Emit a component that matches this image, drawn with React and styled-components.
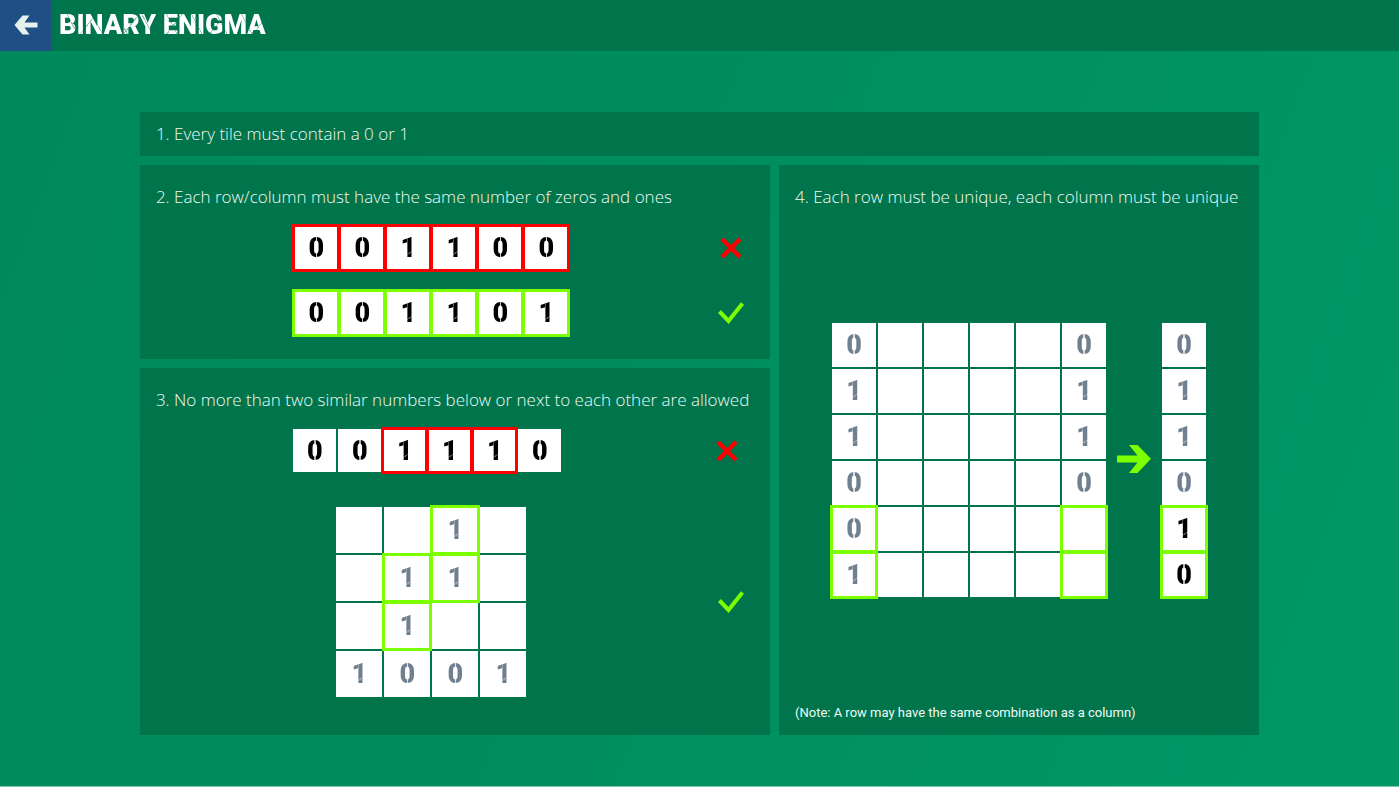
import styled, { createGlobalStyle, css } from "styled-components";

const GlobalStyle = createGlobalStyle`
  * {
    box-sizing: border-box;
  }

  body {
    margin: 0;
    font-family: "Open Sans", "Noto Sans", sans-serif;
    color: #f0faf5;
  }
`;

const colors = {
  panel: "#00754c",
  wrong: "#ff0000",
  right: "#7cff00",
  given: "#708090",
  filled: "#000000",
};

const Page = styled.div`
  min-height: 100vh;
  background: linear-gradient(110deg, #008a5b 0%, #008d5e 45%, #009866 100%);
  border-bottom: 1px solid #7cc8ac;
`;

const Header = styled.header`
  display: flex;
  align-items: center;
  gap: 8px;
  height: 51px;
  background-color: ${colors.panel};
`;

const BackButton = styled.button`
  display: flex;
  align-items: center;
  justify-content: center;
  width: 51px;
  height: 51px;
  padding: 0 0 2px;
  border: none;
  background-color: #234b8c;
  cursor: pointer;

  &:hover {
    opacity: 0.9;
  }
`;

const Title = styled.h1`
  margin: 0;
  padding-bottom: 2px;
  font-family: Roboto, sans-serif;
  font-size: 27px;
  font-weight: 900;
  line-height: 36px;
  color: transparent;
  background-image: repeating-linear-gradient(
      62deg,
      transparent 0 21px,
      rgba(0, 117, 76, 0.4) 21px 22px
    ),
    repeating-linear-gradient(
      128deg,
      transparent 0 33px,
      rgba(0, 117, 76, 0.4) 33px 34px
    ),
    linear-gradient(#fff, #fff);
  -webkit-background-clip: text;
  background-clip: text;
`;

const Rules = styled.main`
  display: grid;
  grid-template-columns: minmax(0, 21fr) minmax(0, 16fr);
  gap: 9px;
  padding: 61px 10% 50px;
`;

const Panel = styled.section`
  display: flex;
  flex-direction: column;
  padding: ${({ $padding }) => $padding};
  background-color: ${colors.panel};
  ${({ $wide }) => $wide && "grid-column: 1 / -1;"}
  ${({ $tall }) => $tall && "grid-column: 2; grid-row: 2 / span 2;"}
`;

const RuleText = styled.h2`
  margin: 0;
  font-size: 17px;
  font-weight: 300;
  line-height: 24px;
  white-space: nowrap;
`;

const Note = styled.p`
  margin: 0;
  font-family: Roboto, sans-serif;
  font-size: 13px;
  line-height: 20px;
  white-space: nowrap;
`;

const Examples = styled.div`
  display: flex;
  flex-direction: column;
  gap: ${({ $gap }) => $gap}px;
  padding-top: 17px;
`;

const Example = styled.div`
  display: grid;
  grid-template-columns: 1fr ${({ $markWidth }) => $markWidth}px;
  align-items: center;
  justify-items: center;
`;

const Comparison = styled.div`
  display: flex;
  flex: 1;
  align-items: center;
  justify-content: center;
  gap: 11px;
  padding-top: 8px;
`;

const Board = styled.div`
  display: grid;
  grid-template-columns: repeat(${({ $columns }) => $columns}, ${({ $size }) => $size}px);
  grid-auto-rows: ${({ $size }) => $size}px;
  gap: 2px;
`;

const Tile = styled.div`
  display: flex;
  align-items: center;
  justify-content: center;
  background-color: #fff;
  ${({ $mark }) =>
    $mark &&
    css`
      box-shadow: 0 0 0 2px ${colors[$mark]}, inset 0 0 0 1px ${colors[$mark]};
    `}
`;

// stencil cuts are painted through the glyph
const zeroCut = css`
  background-image: linear-gradient(
    90deg,
    transparent 46%,
    rgba(255, 255, 255, 0.8) 47% 53%,
    transparent 54%
  );
`;

const oneCut = css`
  background-image: linear-gradient(
      90deg,
      transparent 0 6px,
      rgba(255, 255, 255, 0.35) 6px 7px,
      transparent 7px
    ),
    linear-gradient(
      150deg,
      transparent 0 22px,
      rgba(255, 255, 255, 0.35) 22px 23px,
      transparent 23px
    );
`;

const Digit = styled.span`
  font-family: Roboto, sans-serif;
  font-size: 27px;
  font-weight: 900;
  line-height: 32px;
  color: transparent;
  ${({ $value }) => ($value === "0" ? zeroCut : oneCut)}
  background-color: ${({ $given }) => ($given ? colors.given : colors.filled)};
  -webkit-background-clip: text;
  background-clip: text;
`;

const BackIcon = () => (
  <svg width="24" height="20" viewBox="0 0 24 20" aria-hidden="true">
    <path
      d="M.5 10 8.500 .5h7L10.500 7.500H23.500v5H10.500L15.500 19.500h-7z"
      fill="#fff"
    />
  </svg>
);

const ArrowIcon = () => (
  <svg width="34" height="30" viewBox="0 0 34 30" aria-hidden="true">
    <path
      d="M0 10.500h20.500L12 0h8.500L34 13.700 20.500 28H12l8.500-10.500H0z"
      fill={colors.right}
    />
  </svg>
);

const CrossIcon = () => (
  <svg width="22" height="22" viewBox="0 0 22 22" role="img" aria-label="Wrong">
    <path d="M2 2 20 20M20 2 2 20" stroke={colors.wrong} strokeWidth="4.400" />
  </svg>
);

const CheckIcon = () => (
  <svg width="26" height="22" viewBox="0 0 26 22" role="img" aria-label="Right">
    <path
      d="M1.500 9.500 10.500 19 24.500 1.500"
      fill="none"
      stroke={colors.right}
      strokeWidth="4"
    />
  </svg>
);

// Every character is one tile, a dot is an empty tile.
const Tiles = ({ rows, size = 44, given, mark, marked = [], filled = [] }) => (
  <Board $columns={rows[0].length} $size={size}>
    {rows.flatMap((row, y) =>
      [...row].map((value, x) => {
        const key = `${x},${y}`;
        const isMarked = marked === "all" || marked.includes(key);
        return (
          <Tile key={key} $mark={isMarked ? mark : undefined}>
            {value !== "." && (
              <Digit $value={value} $given={given && !filled.includes(key)}>
                {value}
              </Digit>
            )}
          </Tile>
        );
      })
    )}
  </Board>
);

export default function App() {
  return (
    <Page>
      <GlobalStyle />
      <Header>
        <BackButton type="button" aria-label="Back">
          <BackIcon />
        </BackButton>
        <Title>BINARY ENIGMA</Title>
      </Header>
      <Rules>
        <Panel $wide $padding="10px 16px">
          <RuleText>1. Every tile must contain a 0 or 1</RuleText>
        </Panel>

        <Panel $padding="20px 16px 24px">
          <RuleText>
            2. Each row/column must have the same number of zeros and ones
          </RuleText>
          <Examples $gap={21}>
            <Example $markWidth={47}>
              <Tiles rows={["001100"]} mark="wrong" marked="all" />
              <CrossIcon />
            </Example>
            <Example $markWidth={47}>
              <Tiles rows={["001101"]} mark="right" marked="all" />
              <CheckIcon />
            </Example>
          </Examples>
        </Panel>

        <Panel $tall $padding="20px 16px 12px">
          <RuleText>4. Each row must be unique, each column must be unique</RuleText>
          <Comparison>
            <Tiles
              rows={["0....0", "1....1", "1....1", "0....0", "0.....", "1....."]}
              given
              mark="right"
              marked={["0,4", "5,4", "0,5", "5,5"]}
            />
            <ArrowIcon />
            <Tiles
              rows={["0", "1", "1", "0", "1", "0"]}
              given
              mark="right"
              marked={["0,4", "0,5"]}
              filled={["0,4", "0,5"]}
            />
          </Comparison>
          <Note>(Note: A row may have the same combination as a column)</Note>
        </Panel>

        <Panel $padding="20px 16px 38px">
          <RuleText>
            3. No more than two similar numbers below or next to each other are
            allowed
          </RuleText>
          <Examples $gap={35}>
            <Example $markWidth={55}>
              <Tiles
                rows={["001110"]}
                size={43}
                mark="wrong"
                marked={["2,0", "3,0", "4,0"]}
              />
              <CrossIcon />
            </Example>
            <Example $markWidth={47}>
              <Tiles
                rows={["..1.", ".11.", ".1..", "1001"]}
                size={46}
                given
                mark="right"
                marked={["2,0", "1,1", "2,1", "1,2"]}
              />
              <CheckIcon />
            </Example>
          </Examples>
        </Panel>
      </Rules>
    </Page>
  );
}
